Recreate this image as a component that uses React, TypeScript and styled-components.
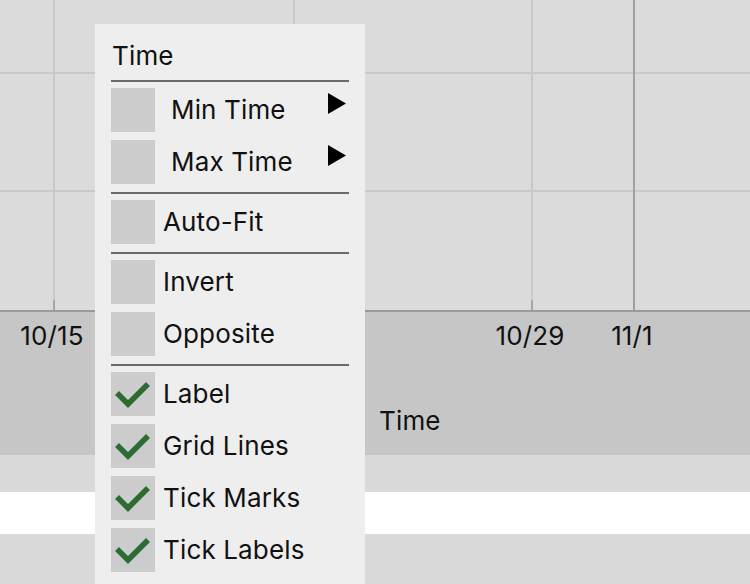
import React from "react";
import styled, { createGlobalStyle } from "styled-components";

const Global = createGlobalStyle`
  html, body { margin: 0; padding: 0; background: #dbdbdb; }
  body { font-family: Inter, "Noto Sans", "Liberation Sans", sans-serif; overflow: hidden; }
`;

const Page = styled.div`
  position: relative;
  width: 750px;
  height: 584px;
  overflow: hidden;
  display: flex;
  flex-direction: column;
  color: #111;
  letter-spacing: 0.15px;
`;

const PlotArea = styled.div`
  height: 310px;
  background: #dbdbdb;
  flex-shrink: 0;
  svg { display: block; }
`;

const AxisBand = styled.div`
  position: relative;
  height: 143px;
  flex-shrink: 0;
  background: #c6c6c6;
  border-top: 2px solid #9b9b9b;
`;

const TickLabel = styled.span`
  position: absolute;
  top: 8px;
  transform: translateX(-50%);
  font-size: 26px;
  line-height: 32px;
  white-space: nowrap;
`;

const AxisLabel = styled.div`
  padding: 93px 0 0 379px;
  font-size: 26px;
  line-height: 32px;
`;

const Stripe = styled.div<{ $bg: string; $h: number }>`
  flex-shrink: 0;
  height: ${(p) => p.$h}px;
  background: ${(p) => p.$bg};
`;

const Menu = styled.div`
  position: absolute;
  left: 95px;
  top: 24px;
  width: 238px;
  padding: 16px;
  background: #eeeeee;
  display: flex;
  flex-direction: column;
  gap: 8px;
`;

const MenuTitle = styled.div`
  font-size: 26px;
  line-height: 32px;
  padding-left: 1px;
`;

const Separator = styled.div`
  height: 2px;
  background: #6b6b6b;
  margin-bottom: -2px;
`;

const Item = styled.div`
  display: flex;
  align-items: center;
  height: 44px;
  gap: 8px;
`;

const Box = styled.div`
  width: 44px;
  height: 44px;
  flex-shrink: 0;
  background: #cccccc;
  svg { display: block; }
`;

const ItemText = styled.span<{ $indent: number }>`
  font-size: 26px;
  line-height: 32px;
  padding-left: ${(p) => p.$indent}px;
  white-space: nowrap;
`;

const Arrow = styled.svg`
  margin-left: auto;
  margin-right: 3px;
  align-self: flex-start;
  margin-top: 5px;
  flex-shrink: 0;
`;

type Entry =
  | { kind: "sep" }
  | { kind: "item"; label: string; checked?: boolean; submenu?: boolean };

const entries: Entry[] = [
  { kind: "sep" },
  { kind: "item", label: "Min Time", submenu: true },
  { kind: "item", label: "Max Time", submenu: true },
  { kind: "sep" },
  { kind: "item", label: "Auto-Fit" },
  { kind: "sep" },
  { kind: "item", label: "Invert" },
  { kind: "item", label: "Opposite" },
  { kind: "sep" },
  { kind: "item", label: "Label", checked: true },
  { kind: "item", label: "Grid Lines", checked: true },
  { kind: "item", label: "Tick Marks", checked: true },
  { kind: "item", label: "Tick Labels", checked: true },
];

// grid positions along the time axis; the 10/22 label sits under the popup menu
const ticks = [
  { x: 54, label: "10/15", major: false, shown: true },
  { x: 294, label: "10/22", major: false, shown: false },
  { x: 532, label: "10/29", major: false, shown: true },
  { x: 634, label: "11/1", major: true, shown: true },
];

const Check = () => (
  <svg width="44" height="44" viewBox="0 0 44 44">
    <polyline
      points="6,21 17,32 37,12"
      fill="none"
      stroke="#2c6b33"
      strokeWidth="5.5"
      strokeLinejoin="miter"
    />
  </svg>
);

export default function App() {
  return (
    <>
      <Global />
      <Page>
        <PlotArea>
          <svg width="750" height="310" viewBox="0 0 750 310">
            <line x1="0" y1="73" x2="750" y2="73" stroke="#c9c9c9" strokeWidth="2" />
            <line x1="0" y1="191" x2="750" y2="191" stroke="#c9c9c9" strokeWidth="2" />
            {ticks.map((t) => (
              <line
                key={"g" + t.x}
                x1={t.x}
                y1="0"
                x2={t.x}
                y2="310"
                stroke={t.major ? "#a0a0a0" : "#c9c9c9"}
                strokeWidth="2"
              />
            ))}
            {ticks
              .filter((t) => !t.major)
              .map((t) => (
                <line
                  key={"t" + t.x}
                  x1={t.x}
                  y1="300"
                  x2={t.x}
                  y2="310"
                  stroke="#a6a6a6"
                  strokeWidth="2"
                />
              ))}
          </svg>
        </PlotArea>
        <AxisBand>
          {ticks
            .filter((t) => t.shown)
            .map((t) => (
              <TickLabel key={t.label} style={{ left: t.x - 2 }}>
                {t.label}
              </TickLabel>
            ))}
          <AxisLabel>Time</AxisLabel>
        </AxisBand>
        <Stripe $bg="#dadada" $h={37} />
        <Stripe $bg="#ffffff" $h={42} />
        <Stripe $bg="#dadada" $h={60} />

        <Menu>
          <MenuTitle>Time</MenuTitle>
          {entries.map((e, i) =>
            e.kind === "sep" ? (
              <Separator key={i} />
            ) : (
              <Item key={i}>
                <Box>{e.checked && <Check />}</Box>
                <ItemText $indent={e.submenu ? 8 : 0}>{e.label}</ItemText>
                {e.submenu && (
                  <Arrow width="18" height="21" viewBox="0 0 18 21">
                    <polygon points="0,0 18,10.5 0,21" fill="#000" />
                  </Arrow>
                )}
              </Item>
            )
          )}
        </Menu>
      </Page>
    </>
  );
}
